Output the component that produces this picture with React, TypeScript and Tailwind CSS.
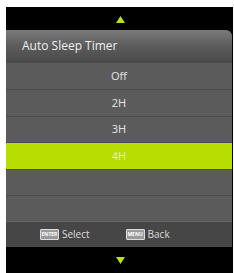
import React from 'react';

const options = [
  { label: 'Off', h: 'h-[27px]' },
  { label: '2H', h: 'h-[27px]' },
  { label: '3H', h: 'h-[26px]' },
  { label: '4H', h: 'h-[27px]', active: true },
  { label: '', h: 'h-[26px]' },
  { label: '', h: 'h-[26px]' },
];

function Arrow({ down }: { down?: boolean }) {
  return (
    <svg width="9" height="7" viewBox="0 0 9 7" className="block">
      {down ? (
        <polygon points="0,0 9,0 4.5,7" fill="#b9e21a" />
      ) : (
        <polygon points="4.5,0 9,7 0,7" fill="#b9e21a" />
      )}
    </svg>
  );
}

function KeyCap({ label }: { label: string }) {
  return (
    <span className="flex h-[11px] w-[19px] items-center justify-center rounded-[1px] border border-[#ddd] bg-[#9a9a9a] text-[5px] font-bold leading-none text-white">
      {label}
    </span>
  );
}

export default function App() {
  return (
    <div className="h-[273px] w-[234px] bg-white pl-[6px] pt-[7px] font-['Open_Sans',sans-serif]">
      <div className="flex h-[266px] w-[227px] flex-col bg-black">
        {/* top arrow */}
        <div className="flex h-[23px] items-center justify-center pl-[2px] pt-[1px]">
          <Arrow />
        </div>

        {/* title */}
        <div className="flex h-[32px] w-[226px] items-center rounded-tr-[6px] bg-gradient-to-b from-[#7a7a7a] via-[#5c5c5c] to-[#4a4a4a] pl-[16px] text-[12px] text-[#f0f0f0]">
          Auto Sleep Timer
        </div>

        {/* options */}
        <div className="flex w-[226px] flex-col bg-[#5b5b5b]">
          {options.map((o, i) => (
            <div
              key={i}
              className={`flex ${o.h} items-center justify-center border-t border-[#4c4c4c] text-[11px] ${
                o.active ? 'bg-[#b7de00] text-[#e4ecc8]' : 'text-[#e6e6e6]'
              }`}
            >
              {o.label}
            </div>
          ))}
        </div>

        {/* footer */}
        <div className="flex h-[26px] w-[226px] items-center border-t border-[#666] bg-[#464646] text-[10px] text-[#ddd]">
          <div className="ml-[34px] flex items-center gap-[3px]">
            <KeyCap label="ENTER" />
            <span>Select</span>
          </div>
          <div className="ml-[36px] flex items-center gap-[3px]">
            <KeyCap label="MENU" />
            <span>Back</span>
          </div>
        </div>

        {/* bottom arrow */}
        <div className="flex flex-1 items-center justify-center pl-[2px]">
          <Arrow down />
        </div>
      </div>
    </div>
  );
}
